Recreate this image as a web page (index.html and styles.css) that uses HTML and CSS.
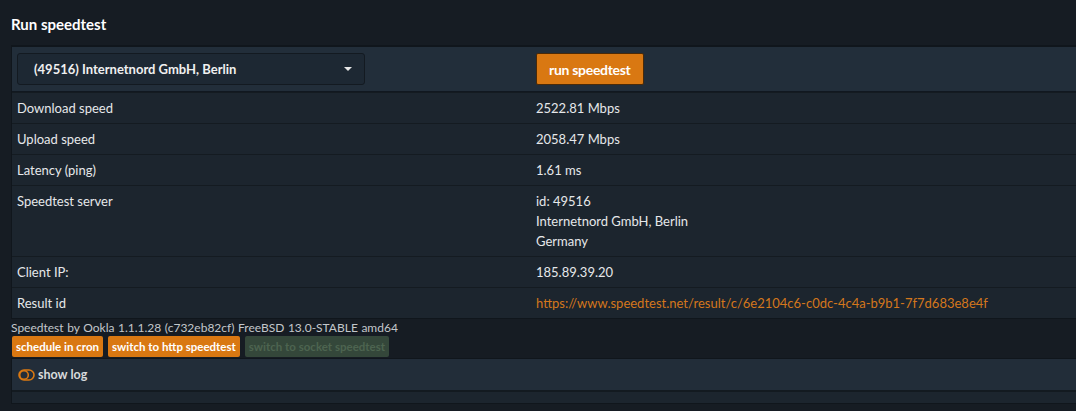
FILE: index.html
```html
<!DOCTYPE html>
<html lang="en">
<head>
    <meta charset="UTF-8">
    <meta name="viewport" content="width=device-width, initial-scale=1.0">
    <title>Run speedtest</title>
    <link rel="stylesheet" href="styles.css">
</head>
<body>
    <h2 class="title">Run speedtest</h2>

    <div class="panel">
        <div class="row head">
            <div class="cell">
                <div class="select">
                    <span>(49516) Internetnord GmbH, Berlin</span>
                    <span class="caret"></span>
                </div>
            </div>
            <div class="cell">
                <button class="btn run">run speedtest</button>
            </div>
        </div>
        <div class="row">
            <div class="cell">Download speed</div>
            <div class="cell">2522.81 Mbps</div>
        </div>
        <div class="row">
            <div class="cell">Upload speed</div>
            <div class="cell">2058.47 Mbps</div>
        </div>
        <div class="row">
            <div class="cell">Latency (ping)</div>
            <div class="cell">1.61 ms</div>
        </div>
        <div class="row">
            <div class="cell">Speedtest server</div>
            <div class="cell">id: 49516<br>Internetnord GmbH, Berlin<br>Germany</div>
        </div>
        <div class="row">
            <div class="cell">Client IP:</div>
            <div class="cell">185.89.39.20</div>
        </div>
        <div class="row">
            <div class="cell">Result id</div>
            <div class="cell"><a class="link" href="#">https://www.speedtest.net/result/c/6e2104c6-c0dc-4c4a-b9b1-7f7d683e8e4f</a></div>
        </div>
    </div>

    <p class="version">Speedtest by Ookla 1.1.1.28 (c732eb82cf) FreeBSD 13.0-STABLE amd64</p>

    <div class="actions">
        <button class="btn small">schedule in cron</button>
        <button class="btn small">switch to http speedtest</button>
        <button class="btn small disabled" disabled>switch to socket speedtest</button>
    </div>

    <div class="log">
        <div class="log-head">
            <svg class="toggle" width="17" height="12" viewBox="0 0 17 12">
                <rect x="1" y="1" width="15" height="10" rx="5" fill="none" stroke="#d97812" stroke-width="1.6"/>
                <circle cx="6" cy="6" r="4.3" fill="none" stroke="#d97812" stroke-width="1.6"/>
            </svg>
            <span>show log</span>
        </div>
        <div class="log-body"></div>
    </div>
</body>
</html>
```

FILE: styles.css
```css
body {
    margin: 0;
    background: #161c23;
    color: #e6e8ea;
    font-family: Lato, "Noto Sans", sans-serif;
    font-size: 13px;
}
.title {
    margin: 0;
    padding: 15px 11px 12px;
    font-size: 15px;
    font-weight: 700;
    color: #fff;
}
.panel {
    margin-left: 11px;
    border-left: 1px solid #10161c;
    border-top: 2px solid #10161c;
    border-bottom: 1px solid #10161c;
}
.row {
    display: grid;
    grid-template-columns: 519px 1fr;
    background: #1c252e;
    border-top: 1px solid #141b21;
}
.row:first-child { border-top: none; }
.cell {
    padding: 5px 5px;
    line-height: 20px;
}
.row.head {
    background: #222e3a;
    border-bottom: 1px solid #111820;
}
.row.head .cell { padding: 6px 5px; }
.select {
    display: flex;
    align-items: center;
    justify-content: space-between;
    width: 348px;
    height: 32px;
    padding: 0 12px 0 16px;
    box-sizing: border-box;
    background: #1d2833;
    border: 1px solid #131a21;
    border-radius: 3px;
    font-weight: 700;
    color: #f0f0f0;
}
.caret {
    border-left: 4px solid transparent;
    border-right: 4px solid transparent;
    border-top: 4px solid #e8e8e8;
}
.btn {
    font-family: inherit;
    font-weight: 700;
    color: #fff;
    background: #d97812;
    border: 1px solid #4a2a08;
    border-radius: 2px;
    cursor: pointer;
}
.btn.run {
    height: 32px;
    padding: 0 12px;
    font-size: 14px;
    letter-spacing: -0.3px;
}
.link {
    color: #d4771c;
    text-decoration: none;
}
.version {
    margin: 1px 0 0 11px;
    font-size: 12px;
    line-height: 15px;
    color: #c3c7cb;
    word-spacing: 0.5px;
}
.actions {
    display: flex;
    gap: 5px;
    padding: 1px 0 0 12px;
}
.btn.small {
    height: 21px;
    padding: 0 4px;
    font-size: 11.5px;
    border: none;
}
.btn.disabled {
    background: #34473a;
    color: #4d6450;
    cursor: default;
}
.log {
    margin: 1px 0 0 11px;
    border-left: 1px solid #10161c;
    border-top: 1px solid #10161c;
    border-bottom: 1px solid #10161c;
}
.log-head {
    display: flex;
    align-items: center;
    gap: 3px;
    height: 31px;
    padding-left: 6px;
    background: #222d39;
    border-bottom: 2px solid #131a20;
    font-size: 12.5px;
    font-weight: 700;
    color: #d8dadc;
}
.log-body {
    height: 11px;
    background: #1c252e;
}
```
